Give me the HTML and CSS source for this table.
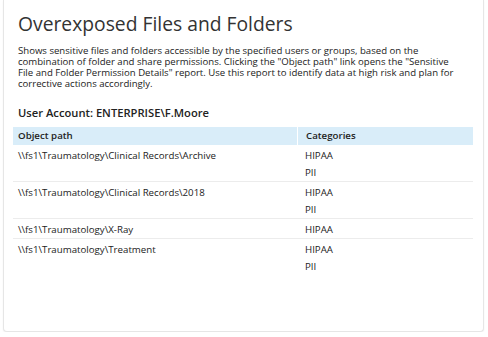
FILE: index.html
```html
<!DOCTYPE html>
<html lang="en">
<head>
<meta charset="utf-8">
<title>Overexposed Files and Folders</title>
<link rel="stylesheet" href="styles.css">
</head>
<body>
<div class="card">
  <h1 class="title">Overexposed Files and Folders</h1>
  <p class="desc">Shows sensitive files and folders accessible by the specified users or groups, based on the combination of folder and share permissions. Clicking the "Object path" link opens the "Sensitive File and Folder Permission Details" report. Use this report to identify data at high risk and plan for corrective actions accordingly.</p>
  <h2 class="account">User Account: ENTERPRISE\F.Moore</h2>
  <div class="table">
    <div class="row head">
      <div class="cell path">Object path</div>
      <div class="cell cat">Categories</div>
    </div>
    <div class="row">
      <div class="cell path"><div class="line">\\fs1\Traumatology\Clinical Records\Archive</div></div>
      <div class="cell cat"><div class="line">HIPAA</div><div class="line">PII</div></div>
    </div>
    <div class="row">
      <div class="cell path"><div class="line">\\fs1\Traumatology\Clinical Records\2018</div></div>
      <div class="cell cat"><div class="line">HIPAA</div><div class="line">PII</div></div>
    </div>
    <div class="row">
      <div class="cell path"><div class="line">\\fs1\Traumatology\X-Ray</div></div>
      <div class="cell cat"><div class="line">HIPAA</div></div>
    </div>
    <div class="row last">
      <div class="cell path"><div class="line">\\fs1\Traumatology\Treatment</div></div>
      <div class="cell cat"><div class="line">HIPAA</div><div class="line">PII</div></div>
    </div>
  </div>
</div>
</body>
</html>
```

FILE: styles.css
```css
html, body {
  margin: 0;
  padding: 0;
  background: #ffffff;
}
body {
  padding: 0 4px 0 3px;
  font-family: "Open Sans", "Liberation Sans", sans-serif;
  color: #333333;
}
.card {
  box-sizing: border-box;
  height: 332px;
  background: #ffffff;
  border: 1px solid #e6e6e6;
  border-top: 0;
  border-radius: 0 0 4px 4px;
  box-shadow: 0 1px 2px rgba(0,0,0,0.06);
  padding: 11px 10px 0 9px;
}
.title {
  margin: 0 0 8px 5px;
  font-size: 19.3px;
  font-weight: 400;
  line-height: 26px;
  color: #333333;
}
.desc {
  margin: 0 0 17px 5px;
  padding-right: 12px;
  font-size: 9.6px;
  line-height: 11px;
  color: #222222;
}
.account {
  margin: 0 0 7px 5px;
  font-size: 11.2px;
  font-weight: 600;
  line-height: 14px;
  color: #222222;
}
.table {
  display: flex;
  flex-direction: column;
  font-size: 9.7px;
  color: #222222;
}
.row {
  display: grid;
  grid-template-columns: 284px 1fr;
  border-bottom: 1px solid #ececec;
  padding-top: 2px;
}
.row.last {
  border-bottom: 0;
}
.row.head {
  background: #d9edf9;
  padding-top: 0;
  border-bottom: 0;
  height: 18px;
  font-weight: 600;
}
.head .cell {
  line-height: 18px;
}
.head .cell.cat {
  border-left: 1px solid #ffffff;
}
.cell.path {
  padding-left: 5px;
}
.cell.cat {
  padding-left: 8px;
}
.line {
  line-height: 17px;
  height: 17px;
}
```
